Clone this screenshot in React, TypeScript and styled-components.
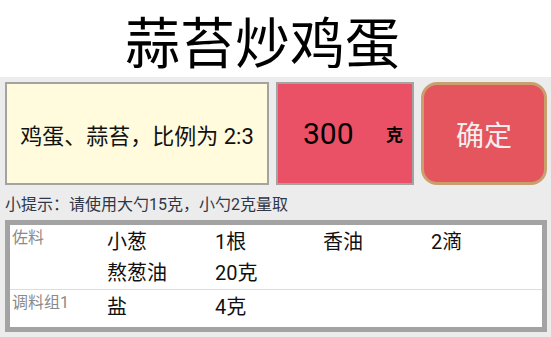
import styled, { createGlobalStyle } from "styled-components";

const GlobalStyle = createGlobalStyle`
  body {
    margin: 0;
    background-color: #ececec;
    font-family: Roboto, "Noto Sans CJK SC", sans-serif;
  }
`;

const Page = styled.div`
  width: 551px;
  height: 337px;
  overflow: hidden;
`;

const Header = styled.div`
  height: 77px;
  background-color: #ffffff;
  display: flex;
  align-items: center;
  justify-content: center;
  padding-right: 26px;
  font-size: 55px;
  color: #000;
`;

const Main = styled.div`
  padding: 5px 4px 0px 5px;
`;

const InputRow = styled.div`
  display: flex;
  gap: 7px;
  height: 103px;
`;

const RatioBox = styled.div`
  box-sizing: border-box;
  width: 264px;
  border: 2px solid #a3a3a3;
  background-color: #fffbdc;
  display: flex;
  align-items: center;
  justify-content: center;
  font-size: 22px;
  color: #111;
`;

const WeightBox = styled.div`
  box-sizing: border-box;
  width: 138px;
  border: 2px solid #a3a3a3;
  background-color: #ea5166;
  display: flex;
  align-items: center;
  padding-left: 25px;

  & .value {
    font-size: 30px;
    color: #000;
    width: 83px;
  }
  & .unit {
    font-size: 17px;
    font-weight: bold;
    color: #000;
  }
`;

const ConfirmButton = styled.button`
  box-sizing: border-box;
  width: 126px;
  border: 3px solid #c9a06d;
  border-radius: 16px;
  background-color: #e5555e;
  color: #f6eeee;
  font-family: inherit;
  font-size: 28px;
  padding: 0;
`;

const Hint = styled.div`
  height: 35px;
  display: flex;
  align-items: center;
  font-size: 16px;
  color: #2f3748;
`;

const Table = styled.div`
  box-sizing: border-box;
  height: 112px;
  border: 5px solid #a3a3a3;
  background-color: #ffffff;
`;

const Group = styled.div<{ $last?: boolean }>`
  display: grid;
  grid-template-columns: 97px 1fr;
  padding-top: 2px;
  border-bottom: ${(p) => (p.$last ? "none" : "1px solid #dddddd")};
`;

const Label = styled.div`
  font-size: 16px;
  line-height: 22px;
  color: #8a8a8a;
  padding-left: 2px;
`;

const Items = styled.div`
  display: grid;
  grid-template-columns: repeat(4, 108px);
  font-size: 20px;
  line-height: 31px;
  color: #111;
`;

const groups = [
  {
    name: "佐料",
    items: [
      ["小葱", "1根"],
      ["香油", "2滴"],
      ["熬葱油", "20克"],
    ],
  },
  {
    name: "调料组1",
    items: [["盐", "4克"]],
  },
];

export default function App() {
  return (
    <Page>
      <GlobalStyle />
      <Header>蒜苔炒鸡蛋</Header>
      <Main>
        <InputRow>
          <RatioBox>鸡蛋、蒜苔，比例为 2:3</RatioBox>
          <WeightBox>
            <span className="value">300</span>
            <span className="unit">克</span>
          </WeightBox>
          <ConfirmButton>确定</ConfirmButton>
        </InputRow>
        <Hint>小提示：请使用大勺15克，小勺2克量取</Hint>
        <Table>
          {groups.map((g, i) => (
            <Group key={g.name} $last={i === groups.length - 1}>
              <Label>{g.name}</Label>
              <Items>
                {g.items.flatMap(([n, q]) => [
                  <span key={n}>{n}</span>,
                  <span key={n + q}>{q}</span>,
                ])}
              </Items>
            </Group>
          ))}
        </Table>
      </Main>
    </Page>
  );
}
